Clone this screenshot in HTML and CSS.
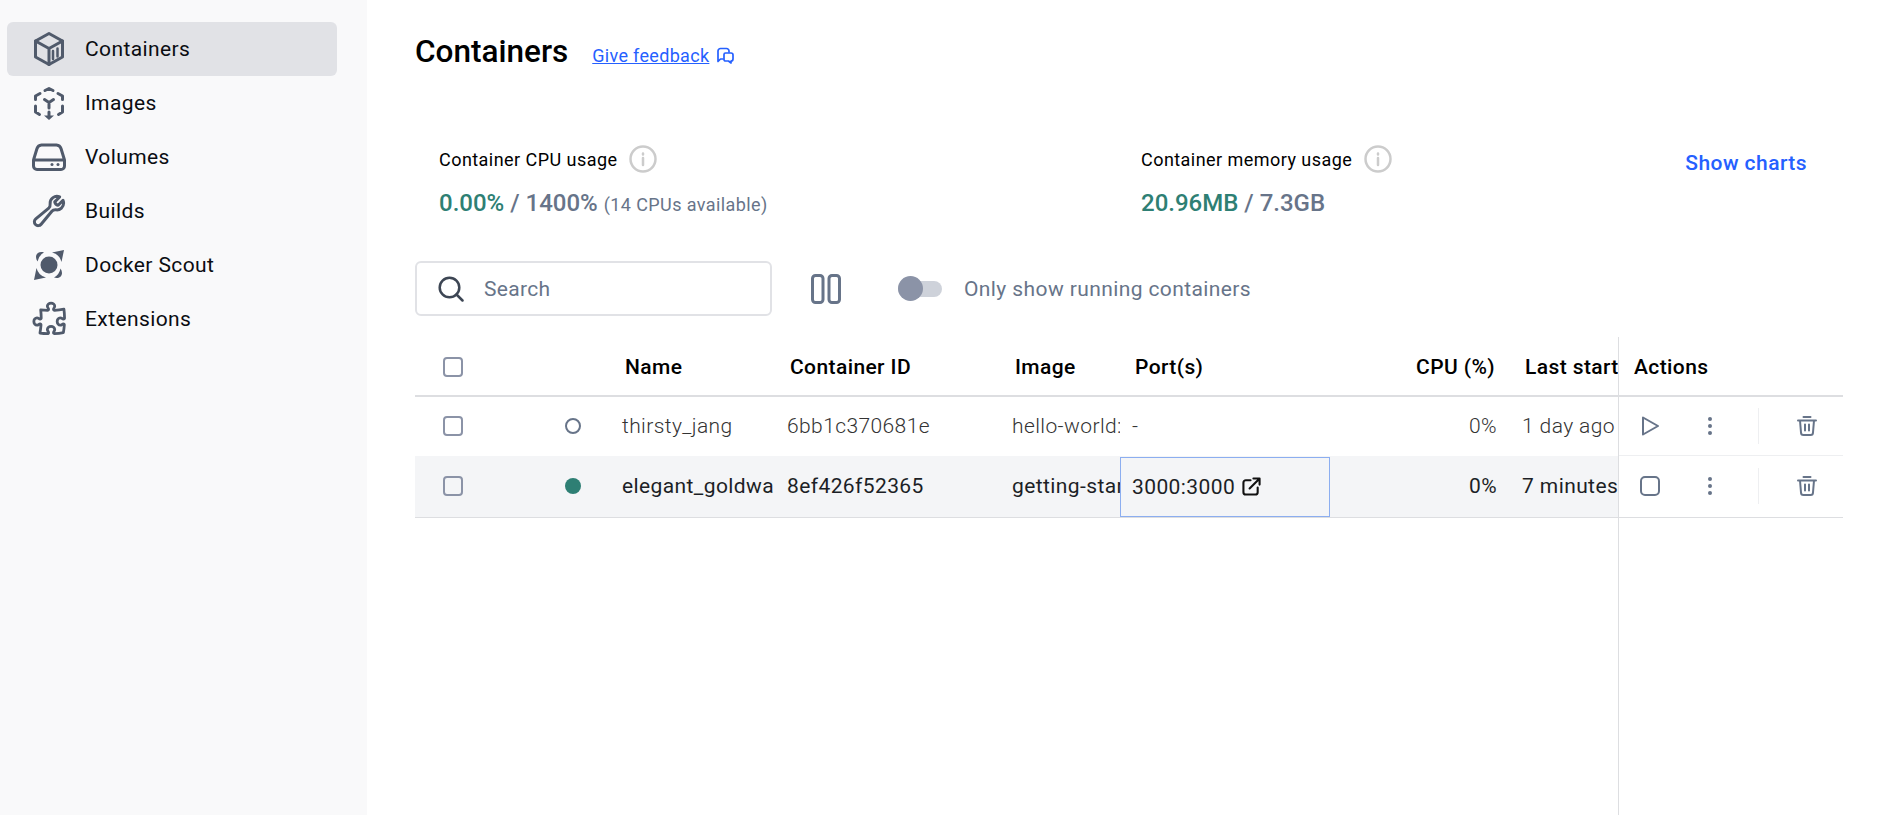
FILE: index.html
```html
<!DOCTYPE html>
<html lang="en">

<head>
    <meta charset="UTF-8">
    <meta name="viewport" content="width=device-width, initial-scale=1.0">
    <title>Containers</title>
    <link rel="stylesheet" href="styles.css">
</head>

<body>
    <nav class="sidebar">
        <a class="nav-item active">
            <svg class="nav-icon" viewBox="0 0 36 36"><path d="M18 2.500 31.500 10v16L18 33.500 4.500 26V10z"/><path d="M4.500 10 18 17.500 31.500 10M18 17.500v16"/><path class="thin" d="M22 20v8M26.500 17.500v8"/></svg>
            <span>Containers</span>
        </a>
        <a class="nav-item">
            <svg class="nav-icon" viewBox="0 0 36 36"><path d="M14 5.500 18 3.500l4 2M9 8.500 4.500 11v3.500M27 8.500l4.500 2.500v3.500M4.500 21v6l4 2.500M31.500 21v6l-4 2.500M13.500 14.500l4.500 3 4.500-3M18 17.500V23M18 27v5"/><path class="solid" d="M13 30.500h10L18 35z"/></svg>
            <span>Images</span>
        </a>
        <a class="nav-item">
            <svg class="nav-icon" viewBox="0 0 36 36"><path d="M2.500 21h31v6a3.500 3.500 0 0 1-3.500 3.500H6A3.500 3.500 0 0 1 2.500 27zM2.500 21 6 9.500a5 5 0 0 1 4.500-3.500h15a5 5 0 0 1 4.500 3.500L33.500 21"/><circle class="solid" cx="21" cy="25.500" r="1.500"/><circle class="solid" cx="27" cy="25.500" r="1.500"/></svg>
            <span>Volumes</span>
        </a>
        <a class="nav-item">
            <svg class="nav-icon wide" viewBox="0 0 24 24"><path d="M21.750 6.750a4.500 4.500 0 01-4.884 4.484c-1.076-.091-2.264.071-2.950.904l-7.152 8.684a2.548 2.548 0 11-3.586-3.586l8.684-7.152c.833-.686.995-1.874.904-2.950a4.500 4.500 0 016.336-4.486l-3.276 3.276a3.004 3.004 0 002.250 2.250l3.276-3.276c.256.565.398 1.192.398 1.852z"/></svg>
            <span>Builds</span>
        </a>
        <a class="nav-item">
            <svg class="nav-icon" viewBox="0 0 36 36"><circle class="solid" cx="18" cy="18" r="8.500"/><path class="solid" d="M21 5.500 33 3l-2.500 12A13 13 0 0 0 21 5.500zM15 30.500 3 33l2.500-12A13 13 0 0 0 15 30.500zM13 5.500C9 4 5 6 5 10c0 1.500.500 3 1.500 4.500A13 13 0 0 1 13 5.500zM23 30.500c4 1.500 8-.500 8-4.500 0-1.500-.500-3-1.500-4.500A13 13 0 0 1 23 30.500z"/></svg>
            <span>Docker Scout</span>
        </a>
        <a class="nav-item">
            <svg class="nav-icon puzzle" viewBox="0.500 1 22 22"><path d="M14.250 6.087c0-.355.186-.676.401-.959.221-.29.349-.634.349-1.003 0-1.036-1.007-1.875-2.250-1.875s-2.250.84-2.250 1.875c0 .369.128.713.349 1.003.215.283.401.604.401.959a.64.64 0 01-.657.643 48.390 48.390 0 01-4.163-.3c.186 1.613.293 3.250.315 4.907a.656.656 0 01-.658.663c-.355 0-.676-.186-.959-.401a1.647 1.647 0 00-1.003-.349c-1.036 0-1.875 1.007-1.875 2.250s.84 2.250 1.875 2.250c.369 0 .713-.128 1.003-.349.283-.215.604-.401.959-.401.31 0 .555.26.532.57a48.039 48.039 0 01-.642 5.056c1.518.19 3.058.309 4.616.354a.64.64 0 00.657-.643c0-.355-.186-.676-.401-.959a1.647 1.647 0 01-.349-1.003c0-1.035 1.008-1.875 2.250-1.875 1.243 0 2.250.84 2.250 1.875 0 .369-.128.713-.349 1.003-.215.283-.4.604-.4.959 0 .333.277.599.61.58a48.100 48.100 0 005.427-.63 48.050 48.050 0 00.582-4.717.532.532 0 00-.533-.57c-.355 0-.676.186-.959.401-.29.221-.634.349-1.003.349-1.035 0-1.875-1.007-1.875-2.250s.84-2.250 1.875-2.250c.37 0 .713.128 1.003.349.283.215.604.401.96.401a.656.656 0 00.658-.663 48.422 48.422 0 00-.37-5.360c-1.886.342-3.810.574-5.766.689a.578.578 0 01-.61-.58z"/></svg>
            <span>Extensions</span>
        </a>
    </nav>

    <main class="content">
        <div class="title-row">
            <h1>Containers</h1>
            <a class="feedback">Give feedback</a>
            <svg class="feedback-icon" viewBox="0 0 18 18"><path d="M7 12H4.500L2 14.500V4a2.500 2.500 0 0 1 2.500-2.500h6A2.500 2.500 0 0 1 13 4v1"/><path d="M8 7.500A1.500 1.500 0 0 1 9.500 6h5.500a2 2 0 0 1 2 2v4a2 2 0 0 1-2 2v2l-2.500-2h-3A1.500 1.500 0 0 1 8 12.500z"/></svg>
        </div>

        <section class="stats">
            <div class="stat stat-cpu">
                <div class="stat-label">Container CPU usage
                    <svg class="info" viewBox="0 0 28 28"><circle cx="14" cy="14" r="12.500"/><path d="M14 13v7M14 8.500v1"/></svg>
                </div>
                <div class="stat-value"><span class="green">0.00%</span> / 1400% <small>(14 CPUs available)</small></div>
            </div>
            <div class="stat stat-mem">
                <div class="stat-label">Container memory usage
                    <svg class="info" viewBox="0 0 28 28"><circle cx="14" cy="14" r="12.500"/><path d="M14 13v7M14 8.500v1"/></svg>
                </div>
                <div class="stat-value"><span class="green">20.96MB</span> / 7.3GB</div>
            </div>
            <a class="show-charts">Show charts</a>
        </section>

        <section class="toolbar">
            <div class="search">
                <svg class="search-icon" viewBox="0 0 26 26"><circle cx="11.500" cy="11.500" r="9.800"/><path d="m18.500 18.500 6 6"/></svg>
                <span>Search</span>
            </div>
            <svg class="columns-icon" viewBox="0 0 30 30"><rect x="1.500" y="1.500" width="10.500" height="27" rx="3"/><rect x="18" y="1.500" width="10.500" height="27" rx="3"/></svg>
            <div class="toggle"><div class="toggle-thumb"></div></div>
            <span class="toggle-label">Only show running containers</span>
        </section>

        <section class="table">
            <div class="table-main">
                <div class="row head">
                    <div class="cell"><span class="checkbox"></span></div>
                    <div class="cell"></div>
                    <div class="cell">Name</div>
                    <div class="cell">Container ID</div>
                    <div class="cell">Image</div>
                    <div class="cell">Port(s)</div>
                    <div class="cell cell-right">CPU (%)</div>
                    <div class="cell">Last started</div>
                </div>
                <div class="row stopped">
                    <div class="cell"><span class="checkbox"></span></div>
                    <div class="cell"><span class="status"></span></div>
                    <div class="cell">thirsty_jang</div>
                    <div class="cell">6bb1c370681e</div>
                    <div class="cell">hello-world:latest</div>
                    <div class="cell">-</div>
                    <div class="cell cell-right">0%</div>
                    <div class="cell">1 day ago</div>
                </div>
                <div class="row running">
                    <div class="cell"><span class="checkbox"></span></div>
                    <div class="cell"><span class="status"></span></div>
                    <div class="cell">elegant_goldwasser</div>
                    <div class="cell">8ef426f52365</div>
                    <div class="cell">getting-started</div>
                    <div class="cell port-cell">3000:3000
                        <svg class="open-icon" viewBox="0 0 20 20"><path d="M9 3.500H4a2.500 2.500 0 0 0-2.500 2.500v10A2.500 2.500 0 0 0 4 18.500h10a2.500 2.500 0 0 0 2.500-2.500v-5M8 12 18 2M12 1.500h6.500V8"/></svg>
                    </div>
                    <div class="cell cell-right">0%</div>
                    <div class="cell">7 minutes ago</div>
                </div>
            </div>
            <div class="table-actions">
                <div class="actions-head">Actions</div>
                <div class="actions-row">
                    <span class="action"><svg viewBox="0 0 20 20"><path d="M3 1.500 18 10 3 18.500z"/></svg></span>
                    <span class="action"><svg class="dots" viewBox="0 0 20 20"><circle cx="10" cy="3" r="2"/><circle cx="10" cy="10" r="2"/><circle cx="10" cy="17" r="2"/></svg></span>
                    <span class="divider"></span>
                    <span class="action"><svg viewBox="0 0 20 20"><path d="M1 4.500h18M6.500 1h7M3 4.500l1 12a2.500 2.500 0 0 0 2.500 2.500h7a2.500 2.500 0 0 0 2.500-2.500l1-12M8 8.500v6M12 8.500v6"/></svg></span>
                </div>
                <div class="actions-row last">
                    <span class="action"><svg viewBox="0 0 20 20"><rect x="1" y="1" width="18" height="18" rx="4"/></svg></span>
                    <span class="action"><svg class="dots" viewBox="0 0 20 20"><circle cx="10" cy="3" r="2"/><circle cx="10" cy="10" r="2"/><circle cx="10" cy="17" r="2"/></svg></span>
                    <span class="divider"></span>
                    <span class="action"><svg viewBox="0 0 20 20"><path d="M1 4.500h18M6.500 1h7M3 4.500l1 12a2.500 2.500 0 0 0 2.500 2.500h7a2.500 2.500 0 0 0 2.500-2.500l1-12M8 8.500v6M12 8.500v6"/></svg></span>
                </div>
            </div>
        </section>
    </main>
</body>

</html>
```

FILE: styles.css
```css
* {
    margin: 0;
    padding: 0;
    box-sizing: border-box;
}

html,
body {
    height: 100%;
    overflow: hidden;
}

body {
    display: flex;
    font-family: Roboto, "Liberation Sans", sans-serif;
    color: #000;
    background: #fff;
}

svg {
    fill: none;
    stroke-linecap: round;
    stroke-linejoin: round;
    flex: none;
}

/* sidebar */
.sidebar {
    width: 367px;
    flex: none;
    background: #f9f9fa;
    padding: 22px 30px 0 7px;
}

.nav-item {
    display: flex;
    align-items: center;
    gap: 18px;
    height: 54px;
    padding-left: 24px;
    border-radius: 6px;
    font-size: 21px;
    letter-spacing: .4px;
    color: #0b0d12;
}

.nav-item span {
    margin-bottom: 1px;
}

.nav-item.active {
    background: #e1e2e6;
}

.nav-icon {
    width: 36px;
    height: 36px;
    stroke: #505a6b;
    stroke-width: 3;
}

.nav-icon.wide {
    stroke-width: 2;
}

.nav-icon.puzzle {
    stroke-width: 1.700;
}

.nav-icon .thin {
    stroke-width: 2.500;
}

.nav-icon .solid {
    fill: #505a6b;
    stroke: none;
}

/* heading */
.content {
    flex: 1;
    min-width: 0;
    display: flex;
    flex-direction: column;
    padding: 34px 59px 0 48px;
}

.title-row {
    display: flex;
    align-items: center;
    height: 36px;
}

h1 {
    font-size: 31.500px;
    font-weight: 500;
    margin: -2px 24px 0 0;
}

.feedback {
    font-size: 18px;
    letter-spacing: .32px;
    color: #2560ff;
    text-decoration: underline;
    margin: 7px 7px 0 0;
}

.feedback-icon {
    width: 18px;
    height: 18px;
    stroke: #2560ff;
    stroke-width: 1.700;
    margin-top: 8px;
}

/* stats */
.stats {
    display: flex;
    align-items: flex-start;
    margin-top: 77px;
    padding: 0 36px 0 24px;
}

.stat-cpu {
    width: 702px;
}

.stat-label {
    display: flex;
    align-items: center;
    gap: 12px;
    height: 24px;
    font-size: 18px;
    letter-spacing: .45px;
}

.info {
    width: 28px;
    height: 28px;
    stroke: #ccc;
    stroke-width: 2.500;
}

.stat-value {
    margin-top: 19px;
    height: 26px;
    line-height: 26px;
    font-size: 24px;
    font-weight: 500;
    color: #677489;
}

.stat-value small {
    font-size: 18px;
    font-weight: 400;
    letter-spacing: .4px;
}

.green {
    color: #2e7f74;
}

.show-charts {
    margin-left: auto;
    margin-top: 4px;
    font-size: 21px;
    font-weight: 500;
    letter-spacing: .45px;
    color: #2560ff;
}

/* toolbar */
.toolbar {
    display: flex;
    align-items: center;
    margin-top: 45px;
    height: 55px;
}

.search {
    display: flex;
    align-items: center;
    gap: 20px;
    width: 357px;
    height: 55px;
    padding-left: 21px;
    border: 2px solid #e1e2e6;
    border-radius: 6px;
    font-size: 21px;
    letter-spacing: .3px;
    color: #677489;
}

.search-icon {
    width: 26px;
    height: 26px;
    stroke: #3d4654;
    stroke-width: 2.500;
}

.columns-icon {
    width: 30px;
    height: 30px;
    margin-left: 39px;
    stroke: #677489;
    stroke-width: 3;
}

.toggle {
    display: flex;
    align-items: center;
    width: 44px;
    height: 16px;
    margin-left: 57px;
    border-radius: 8px;
    background: #ced2da;
}

.toggle-thumb {
    width: 25px;
    height: 25px;
    border-radius: 50%;
    background: #8b93a7;
}

.toggle-label {
    margin-left: 22px;
    font-size: 21px;
    letter-spacing: .4px;
    color: #677489;
}

/* table */
.table {
    flex: 1;
    display: flex;
    margin-top: 21px;
}

.table-main {
    width: 1203px;
    flex: none;
}

.row {
    display: grid;
    grid-template-columns: 130px 60px 168px 222px 125px 210px 175px 113px;
    font-size: 21px;
    letter-spacing: .4px;
}

.cell {
    display: flex;
    align-items: center;
    min-width: 0;
    overflow: hidden;
    white-space: nowrap;
    padding-left: 17px;
}

.cell:first-child {
    padding-left: 28px;
}

.cell:nth-child(2) {
    padding-left: 20px;
}

.cell:nth-child(4) {
    padding-left: 14px;
}

.cell:nth-child(6) {
    padding-left: 12px;
}

.cell-right {
    justify-content: flex-end;
    padding: 0 8px 0 0;
}

.head {
    height: 60px;
    padding-top: 2px;
    border-bottom: 2px solid #dddee1;
    font-weight: 500;
}

.head .cell {
    padding-left: 20px;
}

.head .cell:first-child {
    padding-left: 28px;
}

.head .cell:nth-child(4) {
    padding-left: 17px;
}

.head .cell:nth-child(6) {
    padding-left: 15px;
}

.head .cell-right {
    padding: 0 10px 0 0;
}

.checkbox {
    display: block;
    width: 20px;
    height: 20px;
    border: 2px solid #8b93a7;
    border-radius: 4px;
}

.status {
    display: block;
    width: 16px;
    height: 16px;
    border-radius: 50%;
}

.stopped {
    height: 59px;
    padding-bottom: 1px;
    font-weight: 300;
    color: #333;
}

.stopped .status {
    border: 2px solid #677489;
}

.running {
    height: 62px;
    background: #f4f5f7;
    border-bottom: 1px solid #dddee1;
    color: #1c1f26;
}

.running .cell {
    padding-bottom: 1px;
}

.running .port-cell {
    gap: 7px;
    margin-top: 1px;
    padding: 0 0 1px 11px;
    border: 1px solid #8caef0;
}

.open-icon {
    width: 19px;
    height: 19px;
    stroke: #111;
    stroke-width: 2.200;
}

.running .status {
    background: #2e7f74;
}

.table-actions {
    flex: 1;
    border-left: 1px solid #dddee1;
}

.actions-head {
    display: flex;
    align-items: center;
    height: 60px;
    padding: 2px 0 0 15px;
    border-bottom: 2px solid #dddee1;
    font-size: 21px;
    font-weight: 500;
    letter-spacing: .4px;
}

.actions-row {
    display: flex;
    align-items: center;
    height: 59px;
    padding: 0 0 1px 1px;
    border-bottom: 1px solid #eeeff1;
}

.actions-row.last {
    height: 62px;
    border-bottom-color: #dddee1;
}

.action {
    display: flex;
    justify-content: center;
    width: 60px;
}

.action svg {
    width: 20px;
    height: 20px;
    stroke: #677489;
    stroke-width: 2;
}

.action svg.dots {
    fill: #677489;
    stroke: none;
}

.divider {
    width: 1px;
    height: 36px;
    margin: 0 18px;
    background: #eeeff1;
}
```
